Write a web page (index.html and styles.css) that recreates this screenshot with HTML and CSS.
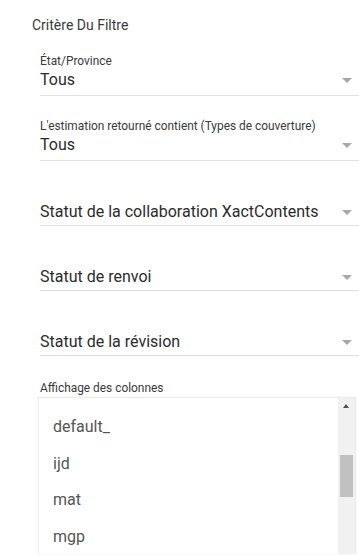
FILE: index.html
```html
<!DOCTYPE html>
<html lang="fr">
<head>
<meta charset="utf-8">
<title>Critère Du Filtre</title>
<link rel="stylesheet" href="styles.css">
</head>
<body>
<div class="page">
  <div class="title">Critère Du Filtre</div>
  <div class="fields">
    <div class="field first">
      <div class="label">État/Province</div>
      <div class="value"><span>Tous</span><span class="caret"></span></div>
    </div>
    <div class="field">
      <div class="label">L'estimation retourné contient (Types de couverture)</div>
      <div class="value"><span>Tous</span><span class="caret"></span></div>
    </div>
    <div class="field empty">
      <div class="value"><span>Statut de la collaboration XactContents</span><span class="caret"></span></div>
    </div>
    <div class="field empty">
      <div class="value"><span>Statut de renvoi</span><span class="caret"></span></div>
    </div>
    <div class="field empty">
      <div class="value"><span>Statut de la révision</span><span class="caret"></span></div>
    </div>
    <div class="columns">
      <div class="label">Affichage des colonnes</div>
      <div class="listbox">
        <div class="items">
          <div class="item">default_</div>
          <div class="item">ijd</div>
          <div class="item">mat</div>
          <div class="item">mgp</div>
        </div>
        <div class="scrollbar">
          <div class="scroll-up"></div>
          <div class="thumb"></div>
        </div>
      </div>
    </div>
  </div>
</div>
</body>
</html>
```
FILE: styles.css
```css
html, body {
  margin: 0;
  padding: 0;
  background: #ffffff;
}
body {
  font-family: Roboto, "Noto Sans", Arial, sans-serif;
  color: #333333;
  overflow: hidden;
}
.page {
  width: 359px;
  height: 555px;
  overflow: hidden;
}
.title {
  padding: 15px 0 0 32px;
  font-size: 14px;
  line-height: 20px;
  color: #3a3a3a;
}
.fields {
  margin-left: 40px;
}
.field {
  box-sizing: border-box;
  height: 65px;
  border-bottom: 1px solid #e0e0e0;
  display: flex;
  flex-direction: column;
  justify-content: flex-end;
  padding-bottom: 5px;
}
.field.first {
  height: 61px;
}
.field.empty {
  padding-bottom: 3px;
}
.label {
  font-size: 11.9px;
  line-height: 14px;
  color: #3a3a3a;
  margin-bottom: 2px;
  white-space: nowrap;
}
.value {
  display: flex;
  justify-content: space-between;
  align-items: center;
  font-size: 16px;
  line-height: 20px;
  color: #2b2b2b;
}
.caret {
  width: 0;
  height: 0;
  border-left: 5px solid transparent;
  border-right: 5px solid transparent;
  border-top: 5px solid #a8a8a8;
  margin-right: 7px;
}
.columns {
  margin-top: 25px;
}
.columns .label {
  margin-bottom: 2px;
}
.listbox {
  margin-left: -2px;
  width: 318px;
  height: 157px;
  box-sizing: border-box;
  border: 1px solid #ececec;
  border-bottom: none;
  box-shadow: 0 0 2px rgba(0, 0, 0, 0.08);
  display: flex;
}
.items {
  flex: 1;
  padding-top: 11px;
}
.item {
  height: 36.5px;
  line-height: 36.5px;
  padding-left: 14px;
  font-size: 16px;
  color: #555555;
}
.scrollbar {
  width: 17px;
  background: #f1f1f1;
  position: relative;
}
.scroll-up {
  position: absolute;
  top: 6px;
  left: 5px;
  width: 0;
  height: 0;
  border-left: 3.5px solid transparent;
  border-right: 3.5px solid transparent;
  border-bottom: 4px solid #505050;
}
.thumb {
  position: absolute;
  top: 57px;
  left: 2px;
  width: 13px;
  height: 42px;
  background: #c1c1c1;
}
```
